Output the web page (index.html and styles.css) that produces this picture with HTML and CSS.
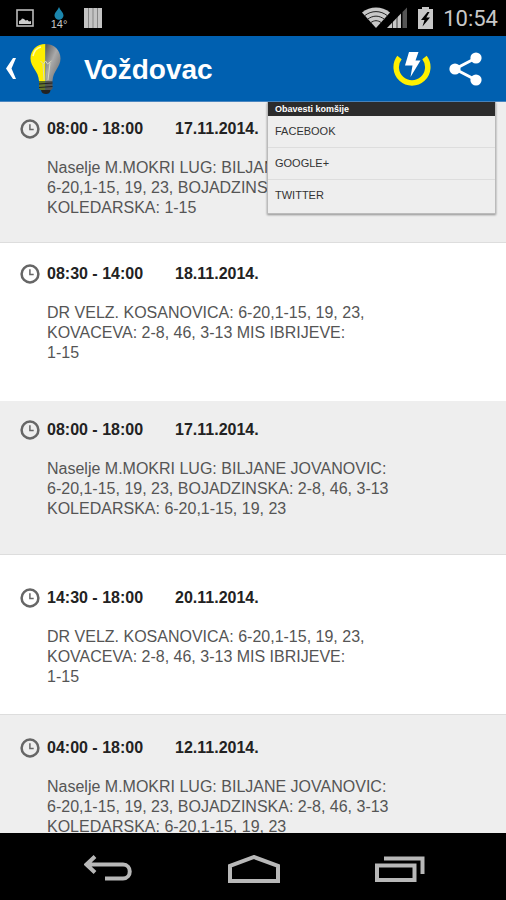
FILE: index.html
```
<!DOCTYPE html>
<html lang="sr">
<head>
    <meta charset="UTF-8">
    <meta name="viewport" content="width=device-width, initial-scale=1.0">
    <title>Voždovac</title>
    <link rel="stylesheet" href="styles.css">
</head>
<body>
    <svg width="0" height="0" class="symbols">
        <symbol id="clock" viewBox="0 0 20 20">
            <circle cx="10" cy="10" r="8.4" fill="none" stroke="#666" stroke-width="2.5"/>
            <path d="M9.900 5.200v5.200h3.800" fill="none" stroke="#666" stroke-width="1.500"/>
        </symbol>
    </svg>
    <div class="status">
        <svg width="18" height="18" viewBox="0 0 18 18">
            <rect x="1" y="1" width="16" height="16" fill="none" stroke="#bbb" stroke-width="1.600"/>
            <path d="M3 15v-3l2-1 1-1.500 2 .5 1.500 1.500 2-.5 1.500 1.500 2-.5v3z" fill="#ccc"/>
        </svg>
        <div class="weather">
            <svg width="10" height="13" viewBox="0 0 10 13">
                <path d="M5 0C4 3 .5 5.500.5 8.500a4.500 4.200 0 0 0 9 0C9.500 5.500 6 3 5 0z" fill="#1b86ad"/>
            </svg>
            <span>14°</span>
        </div>
        <svg width="18" height="20" viewBox="0 0 18 20">
            <path d="M0 0h18v20H0z" fill="#c4c4c4"/>
            <path d="M4.500 0v20M9 0v20M13.500 0v20" stroke="#858585" stroke-width="1"/>
        </svg>
        <div class="status__right">
            <svg width="46" height="22" viewBox="0 0 46 22">
                <path d="M0 5.500C8-1.200 20-1.200 28 5.500L14 21z" fill="#c8c8c8"/>
                <path d="M2.500 8.800c7-5.600 16-5.600 23 0M5.500 12.300c5.400-4.200 11.600-4.200 17 0M8.500 15.800c3.800-2.800 7.200-2.800 11 0" fill="none" stroke="#222" stroke-width="1"/>
                <path d="M25 21L39 6.500V21z" fill="#c8c8c8"/>
                <path d="M40.500 5L45 .5V21h-4.500z" fill="#555"/>
                <path d="M30.500 12v9M35 8v13M39.500 4v17" stroke="#000" stroke-width=".7"/>
            </svg>
            <svg width="15" height="22" viewBox="0 0 15 22">
                <path d="M4 0h7v2h4v20H0V2h4z" fill="#c8c8c8"/>
                <path d="M9.500 5L3 13h3.500L4.500 19.500 12 10.500H8.300L11.500 5z" fill="#000"/>
            </svg>
            <span class="time">10:54</span>
        </div>
    </div>
    <header class="bar">
        <a class="bar__back" href="#" aria-label="Nazad">
            <svg width="10" height="21" viewBox="0 0 10 21">
                <path d="M7 0h3L5.500 10.500 10 21H7L0 10.500z" fill="#fff"/>
            </svg>
            <svg width="31" height="52" viewBox="0 0 31 52">
                <defs>
                    <linearGradient id="glass" x1="0" y1="0" x2="1" y2="1">
                        <stop offset="0" stop-color="#555"/>
                        <stop offset=".45" stop-color="#aaa"/>
                        <stop offset="1" stop-color="#666"/>
                    </linearGradient>
                </defs>
                <path d="M15.500 1C7 1 .5 7 .5 15.500c0 9 8 12 8.500 22.500h6.500z" fill="#ffee00"/>
                <path d="M15.500 1C24 1 30.500 7 30.500 15.500c0 9-7.500 12-8 22.500h-7z" fill="url(#glass)"/>
                <path d="M3 13c1-5 4-8 8-9" fill="none" stroke="#fffbb0" stroke-width="1.500"/>
                <path d="M10.500 18l3 3 2-3 2 3 4-3M13 21l1 16M20 20l-2 17" fill="none" stroke="#d8d8c0" stroke-width="1"/>
                <path d="M9 38h6.500v9.500H11l-2-2z" fill="#65752a"/>
                <path d="M15.500 38h7v7.500l-2 2h-5z" fill="#555"/>
                <path d="M11 47h9.500c-.5 3-2 4-4.500 4s-4.500-1-5-4z" fill="#222"/>
                <path d="M9 41l13.500-1M9 44.500l13.500-1" stroke="#222" stroke-width="1"/>
            </svg>
        </a>
        <h1 class="bar__title">Voždovac</h1>
        <button class="bar__btn" aria-label="Struja">
            <svg width="38" height="36" viewBox="0 0 38 36">
                <path d="M6.500 6.500a15.800 15.800 0 1 0 25 0" fill="none" stroke="#fff000" stroke-width="5.500"/>
                <path d="M16 1h9.500l-3 8.500h5L17.500 26l2-11.500h-7.500z" fill="#fff"/>
            </svg>
        </button>
        <button class="bar__btn" aria-label="Podeli">
            <svg width="33" height="34" viewBox="0 0 33 34">
                <path d="M27 6L6 17l21 11" fill="none" stroke="#fff" stroke-width="3"/>
                <circle cx="27" cy="6" r="5.600" fill="#fff"/>
                <circle cx="6" cy="17" r="5.600" fill="#fff"/>
                <circle cx="27" cy="28" r="5.600" fill="#fff"/>
            </svg>
        </button>
        <div class="share">
            <div class="share__title">Obavesti komšije</div>
            <a href="#">FACEBOOK</a>
            <a href="#">GOOGLE+</a>
            <a href="#">TWITTER</a>
        </div>
    </header>
    <main class="list">
        <section class="item first">
            <svg class="clock" width="20" height="20"><use href="#clock"/></svg>
            <h2><span>08:00 - 18:00</span><span>17.11.2014.</span></h2>
            <p>Naselje M.MOKRI LUG: BILJANE JOVANOVIC:<br>6-20,1-15, 19, 23, BOJADZINSKA: 2-8, 46, 3-13<br>KOLEDARSKA: 1-15</p>
        </section>
        <section class="item second">
            <svg class="clock" width="20" height="20"><use href="#clock"/></svg>
            <h2><span>08:30 - 14:00</span><span>18.11.2014.</span></h2>
            <p>DR VELZ. KOSANOVICA: 6-20,1-15, 19, 23,<br>KOVACEVA: 2-8, 46, 3-13 MIS IBRIJEVE:<br>1-15</p>
        </section>
        <section class="item third">
            <svg class="clock" width="20" height="20"><use href="#clock"/></svg>
            <h2><span>08:00 - 18:00</span><span>17.11.2014.</span></h2>
            <p>Naselje M.MOKRI LUG: BILJANE JOVANOVIC:<br>6-20,1-15, 19, 23, BOJADZINSKA: 2-8, 46, 3-13<br>KOLEDARSKA: 6-20,1-15, 19, 23</p>
        </section>
        <section class="item fourth">
            <svg class="clock" width="20" height="20"><use href="#clock"/></svg>
            <h2><span>14:30 - 18:00</span><span>20.11.2014.</span></h2>
            <p>DR VELZ. KOSANOVICA: 6-20,1-15, 19, 23,<br>KOVACEVA: 2-8, 46, 3-13 MIS IBRIJEVE:<br>1-15</p>
        </section>
        <section class="item fifth">
            <svg class="clock" width="20" height="20"><use href="#clock"/></svg>
            <h2><span>04:00 - 18:00</span><span>12.11.2014.</span></h2>
            <p>Naselje M.MOKRI LUG: BILJANE JOVANOVIC:<br>6-20,1-15, 19, 23, BOJADZINSKA: 2-8, 46, 3-13<br>KOLEDARSKA: 6-20,1-15, 19, 23</p>
        </section>
    </main>
    <nav class="nav">
        <button aria-label="Back">
            <svg width="48" height="28" viewBox="0 0 48 28">
                <path d="M11 1.500L2.500 9.500l8.500 8M2.500 9.500H39c9 0 9 14 0 14H21" fill="none" stroke="#b8b8b8" stroke-width="4"/>
            </svg>
        </button>
        <button aria-label="Home">
            <svg width="52" height="28" viewBox="0 0 52 28">
                <path d="M2 26V11L26 2l24 9v15z" fill="none" stroke="#b8b8b8" stroke-width="4"/>
            </svg>
        </button>
        <button aria-label="Recent">
            <svg width="50" height="28" viewBox="0 0 50 28">
                <path d="M2 10.500h37.500V25H2zM9 3.500h38.500V19" fill="none" stroke="#b8b8b8" stroke-width="4"/>
            </svg>
        </button>
    </nav>
</body>
</html>
```

FILE: styles.css
```
*, *::before, *::after {
    box-sizing: border-box;
}
body {
    margin: 0;
    height: 100vh;
    display: flex;
    flex-direction: column;
    overflow: hidden;
    background: #000;
    font-family: "Liberation Sans", Arial, sans-serif;
}
svg {
    display: block;
    flex: none;
}
.symbols {
    position: absolute;
}
button {
    padding: 0;
    border: none;
    background: none;
    cursor: pointer;
}
.status {
    flex: none;
    height: 36px;
    padding: 0 8px 0 16px;
    display: flex;
    align-items: center;
    gap: 16px;
    color: #c8c8c8;
}
.weather {
    width: 18px;
    display: flex;
    flex-direction: column;
    align-items: center;
    font-size: 11px;
    line-height: 9px;
}
.status__right {
    margin-left: auto;
    display: flex;
    align-items: center;
    gap: 10px;
}
.time {
    font-family: Roboto, sans-serif;
    font-size: 22px;
}
.bar {
    position: relative;
    flex: none;
    height: 66px;
    padding: 0 24px 0 6px;
    display: flex;
    align-items: center;
    gap: 18px;
    background: #0060b0;
    border-bottom: 1px solid #4a86c0;
}
.bar__back {
    display: flex;
    align-items: center;
    gap: 14px;
}
.bar__title {
    flex: 1;
    margin: 0 0 0 5px;
    color: #fff;
    font-size: 28px;
    line-height: 32px;
    padding-top: 3px;
}
.share {
    position: absolute;
    top: 66px;
    right: 10px;
    z-index: 1;
    width: 229px;
    padding-bottom: 2px;
    background: #eee;
    border: 1px solid #bbb;
    border-top: none;
    box-shadow: 0 1px 2px rgba(0, 0, 0, 0.4);
}
.share__title {
    padding-left: 7px;
    background: #2c2c2c;
    color: #fff;
    font-size: 9px;
    font-weight: bold;
    line-height: 14px;
}
.share a {
    display: block;
    padding-left: 7px;
    color: #333;
    font-size: 11px;
    line-height: 31px;
    text-decoration: none;
    border-bottom: 1px solid #ddd;
}
.share a:last-child {
    border-bottom: none;
}
.list {
    flex: 1;
    min-height: 0;
    overflow: hidden;
    background: #fff;
}
.item {
    display: grid;
    grid-template-columns: 20px 1fr;
    column-gap: 7px;
    row-gap: 19px;
    padding: 0 20px;
    border-bottom: 1px solid #ddd;
}
.item:nth-child(odd) {
    background: #eee;
}
.first {
    padding-top: 17px;
    padding-bottom: 24px;
}
.second {
    padding-top: 21px;
    padding-bottom: 38px;
    border-bottom: none;
}
.third {
    padding-top: 19px;
    padding-bottom: 35px;
}
.fourth {
    padding-top: 33px;
    padding-bottom: 27px;
}
.fifth {
    padding-top: 23px;
    padding-bottom: 24px;
}
.item h2 {
    display: flex;
    gap: 32px;
    margin: 0;
    color: #222;
    font-size: 16px;
    line-height: 20px;
}
.item p {
    grid-column: 2;
    margin: 0;
    color: #555;
    font-size: 16px;
    line-height: 20px;
}
.nav {
    flex: none;
    height: 67px;
    padding: 4px 81px 0 84px;
    display: flex;
    align-items: center;
    justify-content: space-between;
}
```
